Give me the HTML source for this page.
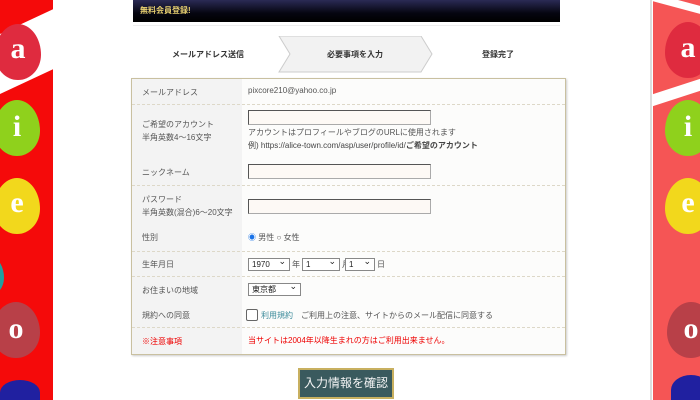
<!DOCTYPE html>
<html><head><meta charset="utf-8"><style>
*{margin:0;padding:0;box-sizing:border-box}
body{width:700px;height:400px;position:relative;overflow:hidden;background:#fff;font-family:"Liberation Sans","Noto Sans CJK JP",sans-serif;font-size:8px;color:#555}
.a{position:absolute}
.bal{position:absolute;border-radius:50% 50% 50% 50%/55% 55% 45% 45%;color:#fff;font:bold 30px "Liberation Serif",serif;text-align:center}
.lbl{position:absolute;left:132px;width:110px;padding-left:10px;background:#f3f3f3;color:#555;font-size:8px;line-height:13px}
.row{position:absolute;left:132px;width:433px;border-bottom:1px dashed #ddd8c8}
.inp{position:absolute;left:248px;width:183px;height:15px;border:1px solid #555;border-bottom-color:#aaa;border-right-color:#aaa;background:#fdf9f5}
.sel{position:absolute;height:13px;border:1px solid #888;background:#fff;font-size:8px;line-height:11px;padding-left:3px;color:#222}
.sel:after{content:"⌄";position:absolute;right:3px;top:-3px;font-size:9px}
</style></head><body>
<!-- left strip -->
<div class="a" style="left:0;top:0;width:53px;height:400px;background:#f50a0a;overflow:hidden">
 <div class="a" style="left:-20px;top:20px;width:100px;height:60px;background:#fff;transform:skewY(-25deg)"></div>
 <div class="bal" style="left:-5px;top:24px;width:46px;height:56px;background:#df2b3f;line-height:50px">a</div>
 <div class="bal" style="left:-6px;top:100px;width:46px;height:56px;background:#8fd11c;line-height:54px">i</div>
 <div class="bal" style="left:-6px;top:178px;width:46px;height:56px;background:#f2d81c;line-height:50px">e</div>
 <div class="bal" style="left:-20px;top:258px;width:24px;height:36px;background:#20a0a0"></div>
 <div class="bal" style="left:-8px;top:302px;width:48px;height:56px;background:#b84048;line-height:54px">o</div>
 <div class="a" style="left:0;top:380px;width:40px;height:25px;border-radius:50% 50% 0 0;background:#2020a0"></div>
</div>
<div class="a" style="left:650px;top:0;width:2px;height:400px;background:#ddd"></div>
<div class="a" style="left:653px;top:0;width:47px;height:400px;background:#f55555;overflow:hidden">
 <div class="a" style="left:-10px;top:0;width:70px;height:8px;background:#fff;transform:skewY(15deg)"></div>
 <div class="a" style="left:-10px;top:86px;width:70px;height:12px;background:#fff;transform:skewY(-18deg)"></div>
 <div class="bal" style="left:12px;top:22px;width:46px;height:56px;background:#df2b3f;line-height:52px">a</div>
 <div class="bal" style="left:12px;top:100px;width:46px;height:56px;background:#8fd11c;line-height:54px">i</div>
 <div class="bal" style="left:12px;top:178px;width:46px;height:56px;background:#f2d81c;line-height:50px">e</div>
 <div class="bal" style="left:14px;top:302px;width:48px;height:56px;background:#b84048;line-height:54px">o</div>
 <div class="a" style="left:18px;top:375px;width:40px;height:30px;border-radius:50% 50% 0 0;background:#2020a0"></div>
</div>
<!-- header -->
<div class="a" style="left:133px;top:0;width:427px;height:22px;background:linear-gradient(#2a2a55,#050510 60%,#000)"></div>
<div class="a" style="left:140px;top:5px;color:#e8d070;font-size:8px;font-weight:bold">無料会員登録!</div>
<div class="a" style="left:133px;top:25px;width:427px;height:1px;background:#eee"></div>
<!-- steps -->
<svg class="a" style="left:275px;top:36px" width="160" height="37"><polygon points="4,0 146,0 157,18 146,36 4,36 15,18" fill="#f2f2f2" stroke="#ccc"/></svg>
<div class="a" style="left:172px;top:49px;font-size:8px;font-weight:bold;color:#333">メールアドレス送信</div>
<div class="a" style="left:327px;top:49px;font-size:8px;font-weight:bold;color:#333">必要事項を入力</div>
<div class="a" style="left:482px;top:49px;font-size:8px;font-weight:bold;color:#333">登録完了</div>
<!-- table -->
<div class="a" style="left:131px;top:78px;width:435px;height:277px;border:1px solid #c9c0a0;background:#fcfcfb;box-shadow:1px 1px 2px #ccc"></div>
<div class="a" style="left:132px;top:79px;width:110px;height:275px;background:#f3f3f3"></div>
<div class="row" style="top:79px;height:26px"></div>
<div class="row" style="top:105px;height:53px;border:none"></div>
<div class="row" style="top:158px;height:28px"></div>
<div class="row" style="top:225px;height:27px"></div>
<div class="row" style="top:252px;height:25px"></div>
<div class="row" style="top:303px;height:25px"></div>
<div class="lbl" style="top:86px">メールアドレス</div>
<div class="lbl" style="top:118px">ご希望のアカウント<br>半角英数4〜16文字</div>
<div class="lbl" style="top:166px">ニックネーム</div>
<div class="lbl" style="top:193px">パスワード<br>半角英数(混合)6〜20文字</div>
<div class="lbl" style="top:231px">性別</div>
<div class="lbl" style="top:258px">生年月日</div>
<div class="lbl" style="top:284px">お住まいの地域</div>
<div class="lbl" style="top:309px">規約への同意</div>
<div class="lbl" style="top:335px;color:#e00">※注意事項</div>
<div class="a" style="left:248px;top:86px;color:#555">pixcore210@yahoo.co.jp</div>
<div class="inp" style="top:110px"></div>
<div class="a" style="left:248px;top:127px;color:#555">アカウントはプロフィールやブログのURLに使用されます</div>
<div class="a" style="left:248px;top:140px;color:#444">例) https://alice-town.com/asp/user/profile/id/<b>ご希望のアカウント</b></div>
<div class="inp" style="top:164px"></div>
<div class="inp" style="top:199px"></div>
<div class="a" style="left:248px;top:232px"><span style="color:#1a73e8">◉</span> 男性 ○ 女性</div>
<div class="sel" style="left:248px;top:258px;width:42px">1970</div><div class="a" style="left:292px;top:259px">年</div>
<div class="sel" style="left:302px;top:258px;width:38px">1</div><div class="a" style="left:342px;top:259px">月</div>
<div class="sel" style="left:345px;top:258px;width:30px">1</div><div class="a" style="left:377px;top:259px">日</div>
<div class="sel" style="left:248px;top:283px;width:53px">東京都</div>
<div class="a" style="left:246px;top:309px;width:12px;height:12px;border:1px solid #666;border-radius:2px;background:#fff"></div>
<div class="a" style="left:261px;top:310px"><span style="color:#3a8a9a">利用規約</span>　ご利用上の注意、サイトからのメール配信に同意する</div>
<div class="a" style="left:248px;top:335px;color:#e00">当サイトは2004年以降生まれの方はご利用出来ません。</div>
<!-- button -->
<div class="a" style="left:298px;top:368px;width:96px;height:31px;background:#3a5a5e;border:2px solid #c8b060;color:#f4f4f4;font-size:12px;line-height:26px;text-align:center">入力情報を確認</div>
</body></html>
